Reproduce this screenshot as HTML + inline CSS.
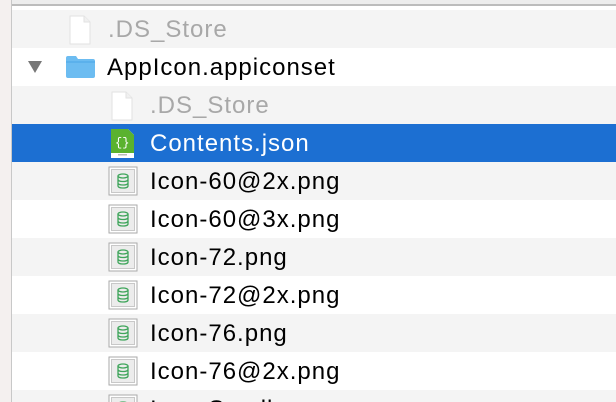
<!DOCTYPE html>
<html style="overflow:hidden;height:402px"><head><style>
html,body{margin:0;width:616px;height:402px;overflow:hidden}
body{background:#fff;font-family:"Liberation Sans",Helvetica,sans-serif;position:relative}
.lb{position:absolute;left:0;top:0;width:11px;height:402px;background:#f4f0ef}
.lv{position:absolute;left:11px;top:0;width:1px;height:402px;background:#c8c8c8}
.tl{position:absolute;left:12px;top:0;width:604px;height:4px;background:#ededed}
.tl2{position:absolute;left:12px;top:4px;width:604px;height:2px;background:#bcbcbc}
.row{position:absolute;left:12px;width:604px;height:38px;overflow:hidden}
.g{background:#f4f4f4}.w{background:#fff}.s{background:#1c6fd2}
.t{position:absolute;font-size:24px;letter-spacing:1px;top:6px;color:#000;white-space:nowrap}
.dim{color:#a8a8a8}
.ic{position:absolute;top:5px}
</style></head><body>
<div class="lb"></div><div class="lv"></div><div class="tl"></div><div class="tl2"></div>
<svg width="0" height="0" style="position:absolute"><defs>
<symbol id="doc" viewBox="0 0 22 30"><path d="M1 1h14l6 6v22H1z" fill="#fff" stroke="#e2e2e2"/><path d="M15 1v6h6" fill="#f0f0f0" stroke="#e2e2e2"/></symbol>
<symbol id="png" viewBox="0 0 30 30"><rect x="1" y="1" width="28" height="28" fill="#fff" stroke="#aaa"/><rect x="3.5" y="3.5" width="23" height="23" fill="#ececec" stroke="#c8c8c8"/><g fill="none" stroke="#3fa55b" stroke-width="1.3"><ellipse cx="15" cy="10" rx="5" ry="2"/><path d="M10 10v10c0 1.2 2.2 2 5 2s5-.8 5-2V10M10 13.5c0 1.2 2.2 2 5 2s5-.8 5-2M10 17c0 1.2 2.2 2 5 2s5-.8 5-2"/></g></symbol>
</defs></svg>
<div class="row g" style="top:10px"><svg class="ic" style="left:57px" width="22" height="30"><use href="#doc"/></svg><div class="t dim" style="left:96px">.DS_Store</div></div>
<div class="row w" style="top:48px"><svg style="position:absolute;left:15px;top:12px" width="16" height="14"><path d="M1 1h14L8 13z" fill="#777"/></svg><svg class="ic" style="left:53px;top:7px" width="31" height="24"><path d="M1 3q0-2 2-2h8l2 3h15q2 0 2 2v15q0 2-2 2H3q-2 0-2-2z" fill="#6cbcf1"/><path d="M1 7h29" stroke="#4aa6e6"/></svg><div class="t" style="left:95px">AppIcon.appiconset</div></div>
<div class="row g" style="top:86px"><svg class="ic" style="left:99px" width="22" height="30"><use href="#doc"/></svg><div class="t dim" style="left:138px">.DS_Store</div></div>
<div class="row s" style="top:124px"><svg class="ic" style="left:98px;top:4px" width="25" height="31"><path d="M1 1h17l6 6v23H1z" fill="#fff"/><path d="M1 1h17l6 6v18H1z" fill="#5ab22f"/><text x="5" y="18" font-size="12" fill="#fff" font-family="Liberation Mono">{}</text><rect x="8" y="26" width="9" height="1.5" fill="#bbb"/></svg><div class="t" style="left:138px;color:#fff">Contents.json</div></div>
<div class="row g" style="top:162px"><svg class="ic" style="left:96px;top:4px" width="30" height="30"><use href="#png"/></svg><div class="t" style="left:138px">Icon-60@2x.png</div></div>
<div class="row w" style="top:200px"><svg class="ic" style="left:96px;top:4px" width="30" height="30"><use href="#png"/></svg><div class="t" style="left:138px">Icon-60@3x.png</div></div>
<div class="row g" style="top:238px"><svg class="ic" style="left:96px;top:4px" width="30" height="30"><use href="#png"/></svg><div class="t" style="left:138px">Icon-72.png</div></div>
<div class="row w" style="top:276px"><svg class="ic" style="left:96px;top:4px" width="30" height="30"><use href="#png"/></svg><div class="t" style="left:138px">Icon-72@2x.png</div></div>
<div class="row g" style="top:314px"><svg class="ic" style="left:96px;top:4px" width="30" height="30"><use href="#png"/></svg><div class="t" style="left:138px">Icon-76.png</div></div>
<div class="row w" style="top:352px"><svg class="ic" style="left:96px;top:4px" width="30" height="30"><use href="#png"/></svg><div class="t" style="left:138px">Icon-76@2x.png</div></div>
<div class="row g" style="top:390px;height:12px"><svg class="ic" style="left:96px;top:4px" width="30" height="30"><use href="#png"/></svg><div class="t" style="left:138px">Icon-Small.png</div></div>
</body></html>
